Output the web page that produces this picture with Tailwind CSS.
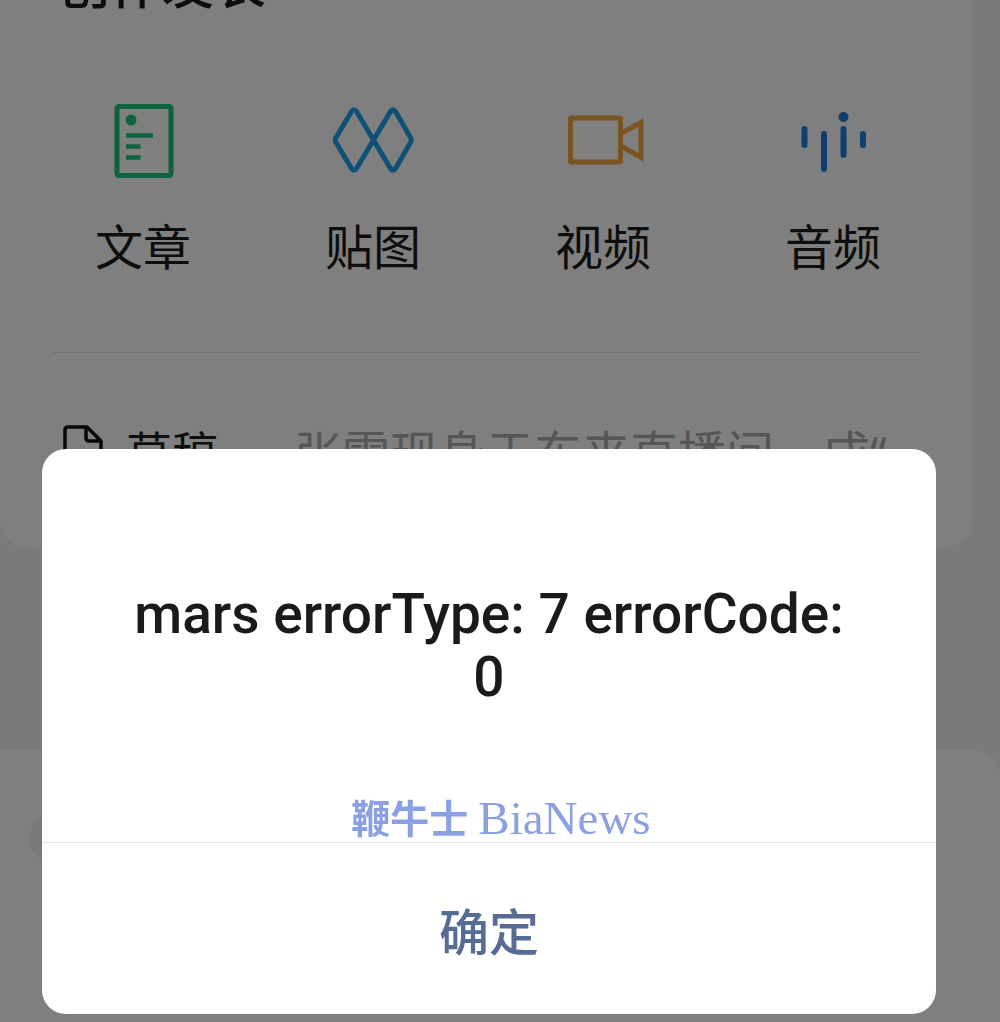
<!DOCTYPE html>
<html lang="zh-CN">

<head>
    <meta charset="UTF-8">
    <meta name="viewport" content="width=device-width, initial-scale=1.0">
    <title>创作发表</title>
    <script src="https://cdn.jsdelivr.net/npm/@tailwindcss/browser@4"></script>
</head>

<body class="bg-[#f2f5f4] font-['Noto_Sans_CJK_SC',sans-serif] text-[#1a1a1a]">
    <div class="h-screen overflow-hidden flex flex-col">
        <!-- create card -->
        <main class="mr-7 h-[548px] shrink-0 rounded-b-[28px] bg-white overflow-hidden">
            <div class="h-3 flex items-end px-[58px]">
                <h1 class="text-[52px] leading-[60px] font-medium">创作发表</h1>
            </div>

            <div class="grid grid-cols-4 pl-7 pr-6 pt-[84px]">
                <a href="#" class="flex flex-col items-center gap-8">
                    <svg class="w-24 h-22" viewBox="0 0 96 88" fill="none" stroke="#1cc87e" stroke-width="5">
                        <rect x="22" y="10.500" width="54" height="69" rx="2" />
                        <circle cx="36" cy="24" r="5.500" fill="#1cc87e" stroke="none" />
                        <path d="M31 39.500h27M31 50.500h14.500M31 61.500h14.500" stroke-width="4.500" />
                    </svg>
                    <span class="text-5xl leading-[56px]">文章</span>
                </a>
                <a href="#" class="flex flex-col items-center gap-8">
                    <svg class="w-24 h-22" viewBox="0 0 96 88" fill="none" stroke="#1ea0ea" stroke-width="5"
                        stroke-linejoin="round">
                        <path
                            d="M48.500 44L31.500 15.500Q29 12 26.500 15.500L11 41.500Q9.500 44 11 46.500L26.500 72.500Q29 76 31.500 72.500L65.500 15.500Q68 12 70.500 15.500L85.500 41.500Q87 44 85.500 46.500L70.500 72.500Q68 76 65.500 72.500Z" />
                    </svg>
                    <span class="text-5xl leading-[56px]">贴图</span>
                </a>
                <a href="#" class="flex flex-col items-center gap-8">
                    <svg class="w-24 h-22" viewBox="0 0 96 88" fill="none" stroke="#f2a640" stroke-width="5">
                        <rect x="15.500" y="22" width="50" height="44" rx="1.500" />
                        <path d="M66 37.500L86 26.500V61.500L66 50" />
                    </svg>
                    <span class="text-5xl leading-[56px]">视频</span>
                </a>
                <a href="#" class="flex flex-col items-center gap-8">
                    <svg class="w-24 h-22" viewBox="0 0 96 88" fill="none" stroke="#1c7fdc" stroke-width="6"
                        stroke-linecap="round">
                        <path d="M19.500 33v16M39 38v35M58.500 33v26M78 38v11" />
                        <circle cx="58.500" cy="21" r="5" fill="#1c7fdc" stroke="none" />
                    </svg>
                    <span class="text-5xl leading-[56px]">音频</span>
                </a>
            </div>

            <hr class="ml-[53px] mr-[54px] mt-20 border-[#e2e2e2]">

            <a href="#" class="flex items-start pl-[62px] pr-12 pt-16 whitespace-nowrap">
                <svg class="w-11 h-14 mt-2" viewBox="0 0 44 56" fill="none" stroke="#111" stroke-width="3.500"
                    stroke-linejoin="round">
                    <path d="M3 50V5Q3 2 6 2H25L39 16V50Q39 52 37 52H5Q3 52 3 50ZM24 2V13Q24 16 27 16H39" />
                </svg>
                <span class="ml-5 text-[46px] leading-[66px]">草稿</span>
                <span class="ml-[76px] text-5xl leading-[72px] text-[#aaa] font-['Open_Sans','Noto_Sans_CJK_SC',sans-serif]">张雪现身于东来直播间，成“</span>
            </a>
        </main>

        <section class="mt-[202px] grow rounded-tr-[28px] bg-white overflow-hidden pt-[60px] pl-[30px]">
            <div class="w-14 h-14 rounded-full bg-[#f2f2f2]"></div>
        </section>
    </div>

    <!-- modal -->
    <div class="fixed inset-0 bg-black/50 flex items-end pl-[42px] pr-16 pb-2">
        <div role="alertdialog" aria-labelledby="message" class="w-full rounded-3xl bg-white overflow-hidden text-center">
            <p id="message"
                class="px-20 pt-[134px] text-[55px] leading-[63px] font-medium font-['Roboto',sans-serif]">
                mars errorType: 7 errorCode: 0</p>
            <div class="mt-[81px] h-[52px] flex items-center justify-center gap-[10px] pl-6 text-[#8ba0e4]">
                <span class="text-[39px] leading-[52px] font-bold">鞭牛士</span>
                <span class="text-[47px] leading-[52px] pt-1 font-['Liberation_Serif',serif]">BiaNews</span>
            </div>
            <button type="button"
                class="w-full h-[172px] border-t border-[#e6e6e6] pt-0.5 text-[50px] font-medium text-[#576b95]">确定</button>
        </div>
    </div>
</body>

</html>
